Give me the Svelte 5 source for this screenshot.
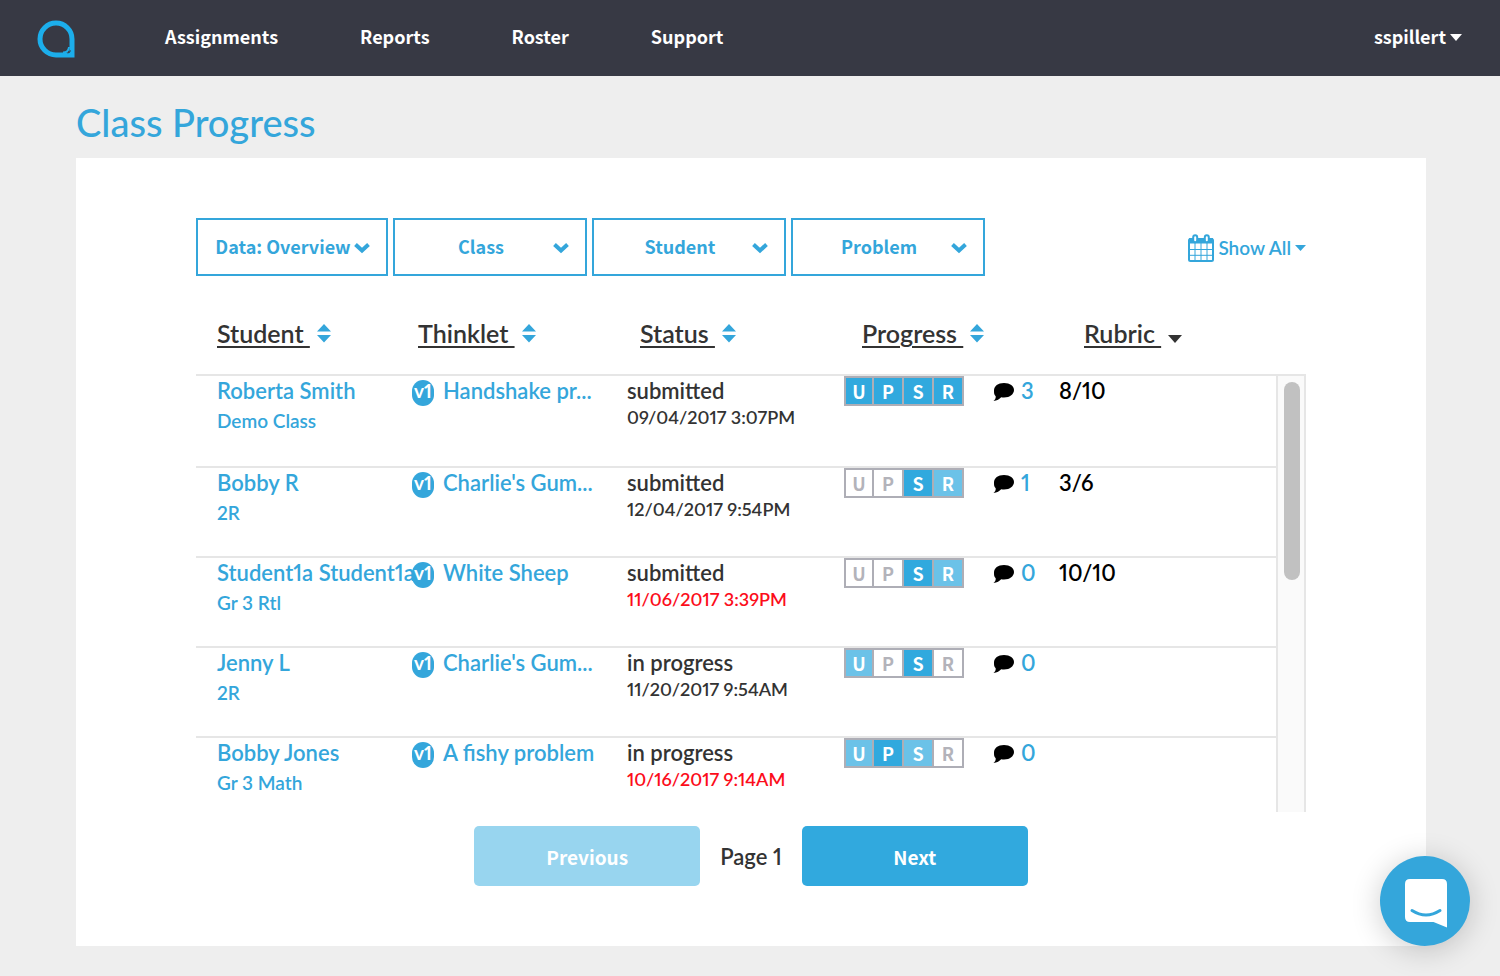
<script>
  let filters = [
    { label: "Data: Overview", name: "data" },
    { label: "Class", name: "class" },
    { label: "Student", name: "student" },
    { label: "Problem", name: "problem" },
  ];

  let columns = ["Student", "Thinklet", "Status", "Progress", "Rubric"];
  let sortedBy = "Rubric";
  let page = 1;

  // steps: one entry per letter of UPSR, 0 = empty, 1 = started, 2 = done
  let rows = [
    { name: "Roberta Smith", group: "Demo Class", thinklet: "Handshake pr...", status: "submitted", date: "09/04/2017 3:07PM", late: false, steps: [2, 2, 2, 2], comments: 3, rubric: "8/10" },
    { name: "Bobby R", group: "2R", thinklet: "Charlie's Gum...", status: "submitted", date: "12/04/2017 9:54PM", late: false, steps: [0, 0, 2, 1], comments: 1, rubric: "3/6" },
    { name: "Student1a Student1a", group: "Gr 3 Rtl", thinklet: "White Sheep", status: "submitted", date: "11/06/2017 3:39PM", late: true, steps: [0, 0, 2, 1], comments: 0, rubric: "10/10" },
    { name: "Jenny L", group: "2R", thinklet: "Charlie's Gum...", status: "in progress", date: "11/20/2017 9:54AM", late: false, steps: [1, 0, 2, 0], comments: 0, rubric: "" },
    { name: "Bobby Jones", group: "Gr 3 Math", thinklet: "A fishy problem", status: "in progress", date: "10/16/2017 9:14AM", late: true, steps: [1, 2, 1, 0], comments: 0, rubric: "" },
  ];
</script>

<header>
  <a class="logo" href="#home" aria-label="Home">
    <svg width="38" height="38" viewBox="0 0 38 38">
      <path class="ring" d="M35 35H19A16 16 0 1 1 35 19Z" />
      <path class="tail" d="M26 32.500Q31.500 32.500 32 27" />
      <path class="nick" d="M30.500 33q2.500 0 3-2.500" />
    </svg>
  </a>
  <nav>
    <a href="#assignments">Assignments</a>
    <a href="#reports">Reports</a>
    <a href="#roster">Roster</a>
    <a href="#support">Support</a>
  </nav>
  <button class="user">
    sspillert
    <svg width="12" height="7" viewBox="0 0 12 7"><path d="M0 0h12L6 7z" /></svg>
  </button>
</header>

<main>
  <h1>Class Progress</h1>

  <div class="card">
    <div class="toolbar">
      {#each filters as filter}
        <div class="filter">
          <select name={filter.name} aria-label={filter.label}>
            <option>{filter.label}</option>
          </select>
          <svg width="16" height="12" viewBox="0 0 16 12"><path d="M1.500 2.500L8 8.500l6.500-6" /></svg>
        </div>
      {/each}
      <button class="range">
        <svg class="calendar" width="26" height="28" viewBox="0 0 26 28">
          <rect x="1" y="5" width="24" height="22" rx="1.500" class="frame" />
          <rect x="1" y="4" width="24" height="5.500" />
          <path class="grid" d="M7 9v18M13 9v18M19 9v18M1 15.500h24M1 21.300h24" />
          <rect x="5.200" y="1.200" width="4" height="7" rx="2" class="ringlet" />
          <rect x="16.800" y="1.200" width="4" height="7" rx="2" class="ringlet" />
        </svg>
        Show All
        <svg width="11" height="6" viewBox="0 0 11 6"><path d="M0 0h11L5.500 6z" /></svg>
      </button>
    </div>

    <div class="list">
      <table>
        <thead>
          <tr>
            {#each columns as column}
              <th>
                <button>
                  <u>{column}&nbsp;</u>
                  {#if column === sortedBy}
                    <svg class="sorted" width="14" height="20" viewBox="0 0 14 20"><path d="M0 12h14l-7 8z" /></svg>
                  {:else}
                    <svg width="14" height="20" viewBox="0 0 14 20"><path d="M0 8.500h14L7 1zM0 12h14l-7 7.500z" /></svg>
                  {/if}
                </button>
              </th>
            {/each}
          </tr>
        </thead>
        <tbody>
          {#each rows as row}
            <tr>
              <td>
                <a href="#student">{row.name}</a>
                <a class="group" href="#group">{row.group}</a>
              </td>
              <td>
                <div class="thinklet">
                  <span class="version">v1</span>
                  <a href="#thinklet">{row.thinklet}</a>
                </div>
              </td>
              <td>
                {row.status}
                <div class="date" class:late={row.late}>{row.date}</div>
              </td>
              <td>
                <div class="steps">
                  {#each row.steps as step, i}
                    <span class:started={step === 1} class:done={step === 2}>{"UPSR"[i]}</span>
                  {/each}
                </div>
              </td>
              <td>
                <a class="comments" href="#comments">
                  <svg width="21" height="19" viewBox="0 0 21 19">
                    <path d="M11 0c6 0 10 3 10 7s-4 7.500-10 7.500c-1 0-2-.1-2.800-.2C6.500 16.200 4 17.600.500 18c1.500-1.300 2.400-2.800 2.200-4.800C1 11.800 1 9.800 1 7.500 1 3 5 0 11 0z" />
                  </svg>
                  {row.comments}
                </a>
              </td>
              <td class="rubric">{row.rubric}</td>
            </tr>
          {/each}
        </tbody>
      </table>
      <div class="track"><div class="thumb"></div></div>
    </div>

    <div class="pager">
      <button disabled>Previous</button>
      <span>Page {page}</span>
      <button>Next</button>
    </div>
  </div>
</main>

<button class="chat" aria-label="Open chat">
  <svg width="42" height="49" viewBox="0 0 42 49">
    <path class="bubble" d="M5 0h32q5 0 5 5v43.500L28.500 43H5q-5 0-5-5V5q0-5 5-5z" />
    <path class="smile" d="M7 31.500q14 9 28 0" />
  </svg>
</button>

<style>
  :global(body) {
    margin: 0;
    background: #eeeeee;
    font-family: Lato, sans-serif;
    font-weight: 600;
    font-variant-numeric: proportional-nums;
    color: #333333;
  }
  a {
    color: #34a6db;
    text-decoration: none;
  }
  button {
    font: inherit;
    font-variant-numeric: inherit;
    color: inherit;
    background: none;
    border: none;
    padding: 0;
    cursor: pointer;
  }
  header {
    display: flex;
    align-items: center;
    height: 76px;
    padding: 0 38px 0 37px;
    box-sizing: border-box;
    background: #373944;
    font-family: "Noto Sans CJK SC", sans-serif;
    font-weight: 700;
    font-size: 18px;
    line-height: 24px;
    color: #fff;
  }
  .logo {
    display: flex;
    padding-top: 2px;
  }
  .logo path {
    fill: none;
    stroke: #1caeeb;
  }
  .logo .ring {
    stroke-width: 5;
  }
  .logo .tail {
    stroke-width: 2;
  }
  .logo .nick {
    stroke: #373944;
    stroke-width: 1;
  }
  nav {
    display: flex;
    flex: 1;
    gap: 82px;
    padding-left: 90px;
  }
  nav a {
    color: #fff;
  }
  nav,
  .user {
    padding-bottom: 4px;
  }
  .user {
    display: flex;
    align-items: center;
    gap: 4px;
  }
  .user svg {
    margin-top: 2px;
    fill: #fff;
  }
  main {
    padding: 0 74px 30px 76px;
  }
  h1 {
    margin: 0;
    padding: 24px 0 14px;
    font-size: 38px;
    font-weight: 500;
    line-height: 44px;
    color: #34a6db;
  }
  .card {
    background: #fff;
    padding: 60px 120px;
  }
  .toolbar {
    display: flex;
    align-items: center;
    gap: 5px;
  }
  .filter {
    display: grid;
    align-items: center;
    width: 194px;
  }
  .filter:first-child {
    width: 192px;
  }
  .filter select,
  .filter svg {
    grid-area: 1 / 1;
  }
  .filter select {
    appearance: none;
    width: 100%;
    height: 58px;
    padding: 0 18px 2px 0;
    border: 2px solid #34a6db;
    border-radius: 0;
    background: #fff;
    font-family: "Noto Sans CJK SC", sans-serif;
    font-weight: 700;
    font-size: 18px;
    text-align: center;
    text-align-last: center;
    color: #34a6db;
  }
  .filter svg {
    justify-self: end;
    margin: 2px 18px 0 0;
    fill: none;
    stroke: #34a6db;
    stroke-width: 4;
    pointer-events: none;
  }
  .range {
    display: flex;
    align-items: center;
    gap: 4px;
    margin-left: auto;
    font-size: 19px;
    color: #34a6db;
    fill: #34a6db;
  }
  .range svg {
    margin-top: 2px;
  }
  .calendar .frame,
  .calendar .grid {
    fill: none;
    stroke: #34a6db;
    stroke-width: 2;
  }
  .calendar .grid {
    stroke-width: 1;
  }
  .calendar .ringlet {
    fill: #fff;
    stroke: #34a6db;
    stroke-width: 2;
  }
  /* the table covers both columns, the scroll track sits beside its body */
  .list {
    display: grid;
    grid-template-columns: 1fr 30px;
    grid-template-rows: 98px 438px;
  }
  table {
    display: block;
    grid-area: 1 / 1 / 3 / 3;
  }
  thead,
  tbody {
    display: block;
  }
  thead tr {
    display: grid;
    grid-template-columns: repeat(5, 1fr);
    height: 98px;
  }
  th {
    padding: 41px 0 0;
    font-weight: 600;
    font-size: 25px;
    line-height: 32px;
    text-align: left;
  }
  th:first-child {
    padding-left: 21px;
  }
  th button {
    display: flex;
    align-items: center;
    gap: 7px;
  }
  th u {
    text-decoration-thickness: 2px;
    text-underline-offset: 3px;
    text-decoration-skip-ink: auto;
  }
  th svg {
    fill: #34a6db;
  }
  th .sorted {
    fill: #333333;
  }
  tbody {
    height: 436px;
    padding-right: 30px;
    border-top: 2px solid #e6e6e6;
    overflow: hidden;
  }
  tbody tr {
    display: grid;
    grid-template-columns: 195fr 215fr 217fr 149fr 66fr 217fr;
    height: 90px;
    padding-left: 21px;
    box-sizing: border-box;
  }
  tbody tr + tr {
    border-top: 2px solid #e6e6e6;
  }
  td {
    min-width: 0;
    padding: 0;
    font-size: 22px;
    line-height: 29px;
    white-space: nowrap;
  }
  .group {
    display: block;
    font-size: 19px;
    line-height: 32px;
  }
  .thinklet {
    display: flex;
    align-items: flex-start;
    gap: 9px;
  }
  .version {
    width: 22px;
    height: 26px;
    margin-top: 4px;
    border-radius: 11px;
    background: #34a6db;
    color: #fff;
    font-size: 19px;
    font-weight: 700;
    line-height: 22px;
    text-align: center;
  }
  .date {
    font-size: 18px;
    line-height: 24px;
  }
  .late {
    color: #fc0d1b;
  }
  .steps {
    display: grid;
    grid-template-columns: 26px repeat(3, 28px);
    gap: 2px;
    width: 116px;
    padding: 2px;
    background: #aeaeb6;
    font-family: "Noto Sans CJK SC", sans-serif;
    font-weight: 700;
    font-size: 18px;
    line-height: 26px;
    text-align: center;
  }
  .steps span {
    height: 26px;
    background: #fff;
    color: #b3b3ba;
  }
  .steps .started {
    background: #6bc2e8;
    color: #fff;
  }
  .steps .done {
    background: #31a9de;
    color: #fff;
  }
  .comments {
    display: flex;
    align-items: center;
    gap: 7px;
  }
  .comments svg {
    padding-top: 3px;
    fill: #000;
  }
  .rubric {
    color: #000;
  }
  .track {
    grid-area: 2 / 2;
    margin-top: 2px;
    padding: 6px 4px 6px 6px;
    border: solid #e6e6e6;
    border-width: 0 2px;
    background: #fafafa;
  }
  .thumb {
    width: 16px;
    height: 198px;
    border-radius: 8px;
    background: #c1c1c1;
  }
  .pager {
    display: flex;
    justify-content: center;
    align-items: center;
    gap: 20px;
    padding-top: 14px;
    font-size: 22px;
  }
  .pager button {
    width: 226px;
    height: 60px;
    border-radius: 5px;
    background: #31a9de;
    color: #fff;
    font-family: "Noto Sans CJK SC", sans-serif;
    font-weight: 700;
    font-size: 19px;
  }
  .pager button:disabled {
    background: #98d5ef;
  }
  .chat {
    position: fixed;
    right: 30px;
    bottom: 30px;
    display: grid;
    place-items: center;
    width: 90px;
    height: 90px;
    border-radius: 50%;
    background: #34a6db;
    box-shadow: 0 4px 30px rgba(0, 0, 0, 0.2);
  }
  .chat svg {
    margin: 4px 0 0 2px;
  }
  .bubble {
    fill: #fff;
  }
  .smile {
    fill: none;
    stroke: #34a6db;
    stroke-width: 3;
    stroke-linecap: round;
  }
</style>
